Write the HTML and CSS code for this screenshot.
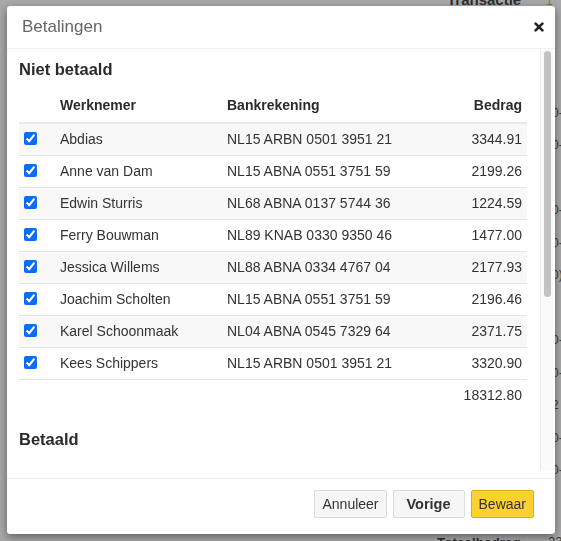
FILE: index.html
```html
<!DOCTYPE html>
<html lang="nl">
<head>
<meta charset="utf-8">
<title>Betalingen</title>
<link rel="stylesheet" href="styles.css">
</head>
<body>
<div class="page">
  <div class="bg-main">
    <div class="bg-top">Transactie</div>
    <div class="bg-bottom">Totaalbedrag</div>
  </div>
  <div class="bg-side">
    <span class="gold bg-first">1</span>
    <div class="bg-marks">
      <span>0-</span><span>0-</span><span class="gold">·</span><span>0-</span><span>0-</span><span>0)</span><span class="gold">·</span><span>0-</span><span>0-</span><span>2</span><span>0-</span><span>0-</span>
    </div>
    <span class="bg-num">22</span>
  </div>
</div>

<div class="modal">
  <div class="modal-header">
    <div class="modal-title">Betalingen</div>
    <button class="close" aria-label="Sluiten">
      <svg width="10" height="10" viewBox="0 0 10 10"><path d="M1.6 1.6 L8.4 8.4 M8.4 1.6 L1.6 8.4" stroke="#222" stroke-width="2.6" stroke-linecap="round"/></svg>
    </button>
  </div>
  <div class="modal-body">
    <div class="body-scroll">
      <h3 class="section-title">Niet betaald</h3>
      <table class="pay-table">
        <colgroup><col class="w-check"><col class="w-name"><col class="w-bank"><col></colgroup>
        <thead>
          <tr><th></th><th>Werknemer</th><th>Bankrekening</th><th class="num">Bedrag</th></tr>
        </thead>
        <tbody>
          <tr><td><input type="checkbox" checked></td><td>Abdias</td><td>NL15 ARBN 0501 3951 21</td><td class="num">3344.91</td></tr>
          <tr><td><input type="checkbox" checked></td><td>Anne van Dam</td><td>NL15 ABNA 0551 3751 59</td><td class="num">2199.26</td></tr>
          <tr><td><input type="checkbox" checked></td><td>Edwin Sturris</td><td>NL68 ABNA 0137 5744 36</td><td class="num">1224.59</td></tr>
          <tr><td><input type="checkbox" checked></td><td>Ferry Bouwman</td><td>NL89 KNAB 0330 9350 46</td><td class="num">1477.00</td></tr>
          <tr><td><input type="checkbox" checked></td><td>Jessica Willems</td><td>NL88 ABNA 0334 4767 04</td><td class="num">2177.93</td></tr>
          <tr><td><input type="checkbox" checked></td><td>Joachim Scholten</td><td>NL15 ABNA 0551 3751 59</td><td class="num">2196.46</td></tr>
          <tr><td><input type="checkbox" checked></td><td>Karel Schoonmaak</td><td>NL04 ABNA 0545 7329 64</td><td class="num">2371.75</td></tr>
          <tr><td><input type="checkbox" checked></td><td>Kees Schippers</td><td>NL15 ARBN 0501 3951 21</td><td class="num">3320.90</td></tr>
        </tbody>
        <tfoot>
          <tr><td colspan="3"></td><td class="num">18312.80</td></tr>
        </tfoot>
      </table>
      <h3 class="section-title spaced">Betaald</h3>
    </div>
    <div class="scrollbar"><div class="thumb"></div></div>
  </div>
  <div class="modal-footer">
    <button class="btn">Annuleer</button>
    <button class="btn btn-bold">Vorige</button>
    <button class="btn btn-primary">Bewaar</button>
  </div>
</div>
</body>
</html>
```
FILE: styles.css
```css
html, body {
  margin: 0;
  padding: 0;
}
body {
  background: #a9a9a9;
  font-family: "Liberation Sans", Arial, sans-serif;
  color: #333;
  overflow: hidden;
}

/* dimmed page behind the dialog */
.page {
  height: 541px;
  display: flex;
  justify-content: flex-end;
  overflow: hidden;
}
.bg-main {
  width: 114px;
  display: flex;
  flex-direction: column;
  justify-content: space-between;
  font-weight: bold;
  color: #2f2f2f;
  white-space: nowrap;
}
.bg-top {
  font-size: 15px;
  margin-top: -9px;
  margin-left: 15px;
}
.bg-bottom {
  font-size: 13.5px;
  margin-left: 5px;
  margin-bottom: -9px;
}
.bg-side {
  width: 15px;
  display: flex;
  flex-direction: column;
  justify-content: space-between;
  font-size: 12px;
  line-height: 14px;
  color: #3a3a3a;
  overflow: hidden;
  white-space: nowrap;
}
.bg-first {
  margin-top: -6px;
}
.bg-marks {
  display: flex;
  flex-direction: column;
  gap: 18.5px;
  padding-left: 6px;
  margin-top: 40px;
}
.gold {
  color: #9a7a10;
}
.bg-num {
  font-size: 13px;
  padding-left: 2px;
  margin-bottom: -8px;
}

/* dialog */
.modal {
  position: fixed;
  top: 6px;
  left: 7px;
  width: 548px;
  height: 528px;
  background: #fff;
  border-radius: 3px;
  box-shadow: 0 3px 10px rgba(0, 0, 0, 0.45);
  display: flex;
  flex-direction: column;
}
.modal-header {
  height: 42px;
  flex: none;
  display: flex;
  align-items: center;
  justify-content: space-between;
  padding: 0 10px 0 15px;
  border-bottom: 1px solid #f0f0f0;
}
.modal-title {
  font-size: 17px;
  color: #666;
}
.close {
  border: 0;
  background: none;
  padding: 0;
  width: 12px;
  height: 12px;
  display: flex;
  align-items: center;
  justify-content: center;
  cursor: pointer;
}

.modal-body {
  height: 421px;
  flex: none;
  display: flex;
  margin-right: 2px;
}
.body-scroll {
  flex: 1;
  min-width: 0;
  overflow: hidden;
  padding: 10px 13px 0 12px;
}
.scrollbar {
  width: 13px;
  flex: none;
  box-sizing: border-box;
  background: #fafafa;
  border-left: 1px solid #ececec;
  padding: 2px 2px 0 3px;
}
.thumb {
  height: 246px;
  border-radius: 4px;
  background: #c2c2c2;
}

.section-title {
  margin: 0 0 9px 0;
  font-size: 16.5px;
  line-height: 20px;
  font-weight: bold;
  color: #2b2b2b;
}
.section-title.spaced {
  margin-top: 18px;
}

.pay-table {
  width: 100%;
  table-layout: fixed;
  border-collapse: collapse;
  font-size: 14px;
  line-height: 20px;
  color: #333;
}
.w-check { width: 36px; }
.w-name { width: 167px; }
.w-bank { width: 200px; }

.pay-table th {
  text-align: left;
  font-weight: bold;
  padding: 7px 5px;
  border-bottom: 2px solid #e8e8e8;
  color: #2b2b2b;
}
.pay-table td {
  padding: 5px 5px 6px 5px;
  white-space: nowrap;
}
.pay-table tbody td {
  border-bottom: 1px solid #e4e4e4;
}
.pay-table tbody tr:nth-child(odd) {
  background: #f9f8f9;
}
.pay-table .num {
  text-align: right;
}
.pay-table input[type="checkbox"] {
  margin: 0;
  width: 13px;
  height: 13px;
  vertical-align: -1px;
  accent-color: #0b6cf6;
}

.modal-footer {
  flex: none;
  margin-top: 8px;
  border-top: 1px solid #f0f0f0;
  height: 55px;
  box-sizing: border-box;
  padding: 11px 21px 0 0;
  display: flex;
  justify-content: flex-end;
  align-items: flex-start;
  gap: 6px;
}
.btn {
  height: 28px;
  box-sizing: border-box;
  padding: 0 7px;
  font-family: "Liberation Sans", Arial, sans-serif;
  font-size: 14px;
  color: #333;
  background: #f7f6f7;
  border: 1px solid #dcdcdc;
  border-radius: 2px;
  cursor: pointer;
}
.btn-bold {
  font-weight: bold;
  min-width: 72px;
  font-size: 14.5px;
}
.btn-primary {
  background: #fdd12f;
  border-color: #dcad18;
  min-width: 63px;
}
```
